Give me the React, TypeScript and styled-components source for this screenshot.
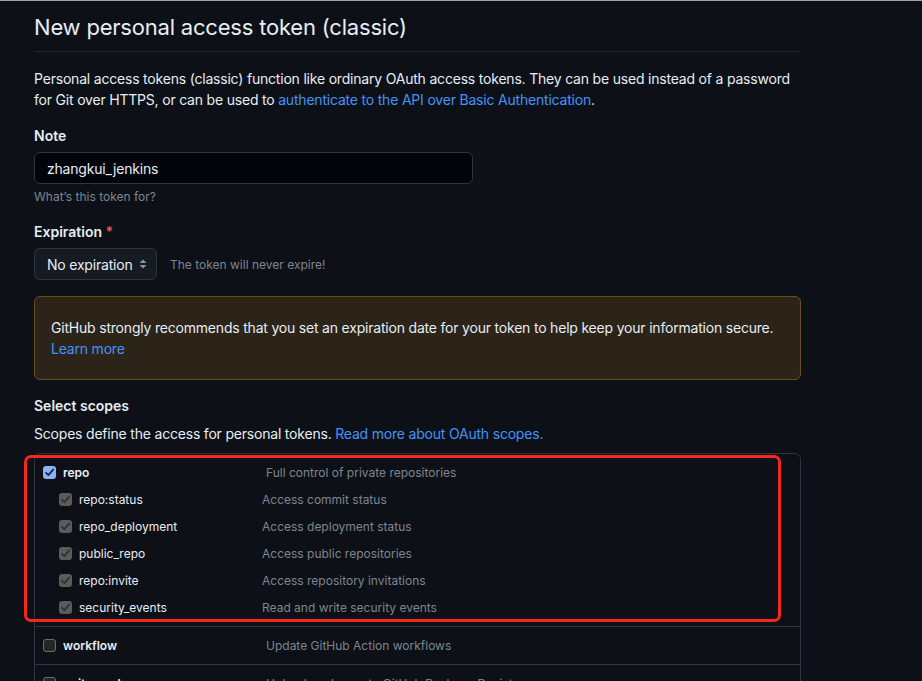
import React from 'react';
import styled, { createGlobalStyle } from 'styled-components';

const GlobalStyle = createGlobalStyle`
  html, body {
    margin: 0;
    padding: 0;
    background: #0d1117;
  }
  body {
    font-family: Inter, "Liberation Sans", sans-serif;
    font-size: 14px;
    line-height: 21px;
    color: #e6edf3;
  }
`;

type Scope = {
  name: string;
  description: string;
};

const repoScopes: Scope[] = [
  { name: 'repo:status', description: 'Access commit status' },
  { name: 'repo_deployment', description: 'Access deployment status' },
  { name: 'public_repo', description: 'Access public repositories' },
  { name: 'repo:invite', description: 'Access repository invitations' },
  { name: 'security_events', description: 'Read and write security events' },
];

const App = () => (
  <Page>
    <GlobalStyle />
    <Header>
      <Title>New personal access token (classic)</Title>
    </Header>

    <Intro>
      Personal access tokens (classic) function like ordinary OAuth access tokens. They can be used
      instead of a password for Git over HTTPS, or can be used to{' '}
      <Link>authenticate to the API over Basic Authentication</Link>.
    </Intro>

    <Label>Note</Label>
    <Input defaultValue="zhangkui_jenkins" />
    <Hint>What’s this token for?</Hint>

    <Label>
      Expiration <Required>*</Required>
    </Label>
    <SelectRow>
      <Select>
        No expiration
        <svg width="8" height="12" viewBox="0 0 8 12">
          <path d="M4 1.5 L7.5 5 H0.5 Z" fill="#8b949e" />
          <path d="M4 10.5 L7.5 7 H0.5 Z" fill="#8b949e" />
        </svg>
      </Select>
      <SelectNote>The token will never expire!</SelectNote>
    </SelectRow>

    <Warning>
      GitHub strongly recommends that you set an expiration date for your token to help keep your
      information secure.
      <br />
      <Link>Learn more</Link>
    </Warning>

    <Label>Select scopes</Label>
    <ScopesIntro>
      Scopes define the access for personal tokens. <Link>Read more about OAuth scopes.</Link>
    </ScopesIntro>

    <ScopesTable>
      <Highlight />
      <ScopeGroup>
        <ScopeRow>
          <Checkbox $state="checked">
            <CheckMark />
          </Checkbox>
          <ScopeName $width={203}>repo</ScopeName>
          <ScopeDesc>Full control of private repositories</ScopeDesc>
        </ScopeRow>
        {repoScopes.map((scope) => (
          <ScopeRow key={scope.name} $sub>
            <Checkbox $state="disabled">
              <CheckMark />
            </Checkbox>
            <ScopeName $width={183} $sub>
              {scope.name}
            </ScopeName>
            <ScopeDesc>{scope.description}</ScopeDesc>
          </ScopeRow>
        ))}
      </ScopeGroup>
      <ScopeGroup>
        <ScopeRow>
          <Checkbox $state="empty" />
          <ScopeName $width={203}>workflow</ScopeName>
          <ScopeDesc>Update GitHub Action workflows</ScopeDesc>
        </ScopeRow>
      </ScopeGroup>
      <ScopeGroup>
        <ScopeRow>
          <Checkbox $state="empty" />
          <ScopeName $width={203}>write:packages</ScopeName>
          <ScopeDesc>Upload packages to GitHub Package Registry</ScopeDesc>
        </ScopeRow>
      </ScopeGroup>
    </ScopesTable>
  </Page>
);

const CheckMark = () => (
  <svg width="11" height="11" viewBox="0 0 12 12">
    <path
      d="M2.2 6.3 L4.8 8.9 L10 2.8"
      fill="none"
      stroke="currentColor"
      strokeWidth="2"
      strokeLinecap="round"
      strokeLinejoin="round"
    />
  </svg>
);

const Page = styled.div`
  border-top: 1px solid #a3a3a3;
  height: 680px;
  overflow: hidden;
  padding: 11px 121px 0 34px;
  display: flex;
  flex-direction: column;
  align-items: flex-start;

  & > * {
    flex-shrink: 0;
  }
`;

const Header = styled.div`
  align-self: stretch;
  padding-bottom: 9px;
  border-bottom: 1px solid #21262d;
`;

const Title = styled.h1`
  margin: 0;
  font-size: 22px;
  line-height: 30px;
  font-weight: 400;
  letter-spacing: -0.2px;
  color: #e6edf3;
`;

const Intro = styled.p`
  margin: 16px 0 0;
  letter-spacing: -0.2px;
  color: #e6edf3;
`;

const Link = styled.a`
  color: #4493f8;
  text-decoration: none;
  cursor: pointer;
`;

const Label = styled.div`
  margin-top: 15px;
  font-weight: 600;
  color: #e6edf3;
`;

const Required = styled.span`
  color: #f85149;
`;

const Input = styled.input`
  margin-top: 6px;
  box-sizing: border-box;
  width: 439px;
  height: 32px;
  padding: 0 12px;
  background: #010409;
  border: 1px solid #30363d;
  border-radius: 6px;
  color: #e6edf3;
  font-family: inherit;
  font-size: 14px;
  letter-spacing: -0.2px;
  outline: none;
`;

const Hint = styled.div`
  margin-top: 4px;
  font-size: 12px;
  line-height: 18px;
  color: #7d8590;
`;

const SelectRow = styled.div`
  margin-top: 6px;
  display: flex;
  align-items: center;
  gap: 13px;
`;

const Select = styled.div`
  box-sizing: border-box;
  width: 123px;
  height: 32px;
  padding: 0 9px 0 12px;
  display: flex;
  align-items: center;
  justify-content: space-between;
  background: #161b22;
  border: 1px solid #30363d;
  border-radius: 6px;
  letter-spacing: -0.2px;
  color: #e6edf3;
`;

const SelectNote = styled.span`
  font-size: 12px;
  color: #7d8590;
`;

const Warning = styled.div`
  margin-top: 16px;
  align-self: stretch;
  padding: 20px 16px;
  background: #2c2419;
  border: 1px solid #6c4d18;
  border-radius: 6px;
  letter-spacing: -0.2px;
  color: #e6edf3;
`;

const ScopesIntro = styled.p`
  margin: 7px 0 0;
  letter-spacing: -0.2px;
  color: #e6edf3;
`;

const ScopesTable = styled.div`
  position: relative;
  margin-top: 9px;
  align-self: stretch;
  border: 1px solid #30363d;
  border-radius: 6px;
`;

const Highlight = styled.div`
  position: absolute;
  left: -11px;
  top: 1px;
  width: 751px;
  height: 161px;
  border: 3px solid #f5291b;
  border-radius: 7px;
  pointer-events: none;
`;

const ScopeGroup = styled.div`
  padding: 5px 0;
  & + & {
    border-top: 1px solid #30363d;
  }
`;

const ScopeRow = styled.div<{ $sub?: boolean }>`
  display: flex;
  align-items: center;
  height: 27px;
  padding-left: ${(p) => (p.$sub ? 24 : 8)}px;
`;

const Checkbox = styled.span<{ $state: 'checked' | 'disabled' | 'empty' }>`
  box-sizing: border-box;
  flex: none;
  width: 13px;
  height: 13px;
  margin-right: 7px;
  border-radius: 3px;
  display: flex;
  align-items: center;
  justify-content: center;
  background: ${(p) =>
    p.$state === 'checked' ? '#8ab4f8' : p.$state === 'disabled' ? '#5b5b5b' : '#262626'};
  border: ${(p) => (p.$state === 'empty' ? '1px solid #6e6e6e' : 'none')};
  color: ${(p) => (p.$state === 'checked' ? '#1d2a3d' : '#333333')};
`;

const ScopeName = styled.span<{ $width: number; $sub?: boolean }>`
  flex: none;
  width: ${(p) => p.$width}px;
  font-size: 12px;
  font-weight: ${(p) => (p.$sub ? 400 : 600)};
  color: #e6edf3;
`;

const ScopeDesc = styled.span`
  font-size: 12px;
  color: #7d8590;
`;

export default App;
